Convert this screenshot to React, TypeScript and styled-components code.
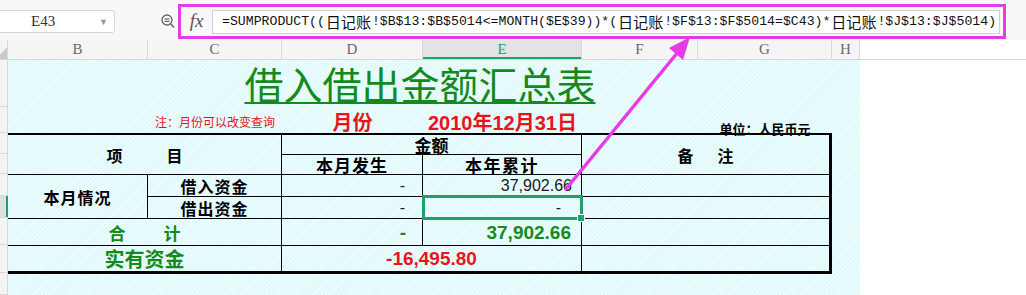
import styled, { createGlobalStyle, css } from 'styled-components';

const GlobalStyle = createGlobalStyle`
  html, body {
    margin: 0;
    padding: 0;
    background: #ffffff;
    overflow: hidden;
  }
  * { box-sizing: border-box; }
`;

const COLS = '140px 134px 141px 159px 116px 134px 28px';
const GREEN = '#148a1c';
const RED = '#e8141c';
const SELECT = '#22a06c';

const Page = styled.div`
	position: relative;
	width: 1026px;
	height: 295px;
	background: #ffffff;
	font-family: 'Noto Sans CJK SC', sans-serif;
`;

/* ---------- formula bar ---------- */

const FormulaBar = styled.div`
	display: flex;
	align-items: flex-start;
	height: 40px;
	padding-top: 4px;
	background: #f8f8f8;
`;

const NameBox = styled.div`
	display: flex;
	align-items: center;
	justify-content: space-between;
	width: 119px;
	height: 23px;
	margin-top: 6px;
	margin-left: -4px;
	padding: 0 6px 0 34px;
	background: #ffffff;
	border: 1px solid #d6d6d6;
	border-radius: 3px;
	font-family: 'Liberation Serif', serif;
	font-size: 15px;
	color: #333333;
`;

const Caret = styled.span`
	font-size: 9px;
	color: #999999;
`;

const ZoomIcon = styled.svg`
	margin: 10px 3px 0 46px;
	flex: none;
`;

const FormulaFrame = styled.div`
	display: flex;
	align-items: center;
	width: 828px;
	height: 35px;
	border: 3px solid #e23de4;
	padding-right: 3px;
`;

const Fx = styled.div`
	width: 31px;
	text-align: center;
	font-family: 'Liberation Serif', serif;
	font-style: italic;
	font-size: 19px;
	color: #555555;
	padding-bottom: 2px;
`;

const FormulaInput = styled.div`
	flex: 1;
	height: 24px;
	display: flex;
	align-items: center;
	padding-left: 9px;
	background: #ffffff;
	border: 1px solid #d2d2d2;
	font-family: 'Liberation Mono', monospace;
	font-size: 13.2px;
	color: #111111;
	white-space: nowrap;
	overflow: hidden;
`;

const Cjk = styled.span`
	font-family: 'Noto Sans CJK SC', sans-serif;
	font-size: 1.15em;
	line-height: 1;
	margin: 0 0.05em;
`;

/* ---------- column headers ---------- */

const ColumnHeaders = styled.div`
	display: grid;
	grid-template-columns: 8px ${COLS} 1fr;
	height: 20px;
	border-bottom: 1px solid #d8d8d8;
`;

const Corner = styled.div`
	background: linear-gradient(135deg, #f3f3f3 55%, #c9c9c9 55%);
	border-right: 1px solid #d8d8d8;
`;

const ColHead = styled.div<{ $active?: boolean }>`
	display: flex;
	align-items: center;
	justify-content: center;
	background: #f5f5f5;
	border-right: 1px solid #dadada;
	font-family: 'Liberation Serif', serif;
	font-size: 15px;
	color: #6a6a6a;
	${p => p.$active && css`
		background: #e3e3e3;
		color: ${SELECT};
		box-shadow: inset 0 -2px 0 ${SELECT};
	`}
`;

const ColRest = styled.div`
	background: #ffffff;
`;

/* ---------- sheet body ---------- */

const SheetBody = styled.div`
	display: flex;
	height: 235px;
`;

const RowHeaders = styled.div`
	display: flex;
	flex-direction: column;
	width: 8px;
`;

const RowHead = styled.div<{ $h: number; $active?: boolean }>`
	height: ${p => p.$h}px;
	flex: none;
	background: ${p => (p.$active ? '#dedede' : '#f4f4f4')};
	border-bottom: 1px solid #d9d9d9;
	box-shadow: ${p => (p.$active ? `inset -2px 0 0 ${SELECT}` : 'inset -1px 0 0 #d9d9d9')};
`;

const Canvas = styled.div`
	width: 852px;
	display: flex;
	flex-direction: column;
	background-color: #e0fafc;
	background-image: repeating-linear-gradient(
		135deg,
		rgba(255, 255, 255, 0.55) 0 1px,
		transparent 1px 3px
	);
`;

const TitleRow = styled.div`
	height: 47px;
	width: 824px;
	display: flex;
	justify-content: center;
	align-items: flex-start;
	padding-top: 4px;
`;

const Title = styled.h1`
	margin: 0;
	font-family: 'Noto Sans CJK SC', sans-serif;
	font-weight: 400;
	font-size: 39px;
	line-height: 38px;
	color: ${GREEN};
	text-decoration: underline;
	text-decoration-thickness: 2px;
	text-underline-offset: 2px;
`;

const InfoRow = styled.div`
	height: 26px;
	display: grid;
	grid-template-columns: ${COLS};
	align-items: center;
`;

const InfoText = styled.div<{ $col: number; $size: number; $bold?: boolean; $color: string; $end?: boolean }>`
	grid-column: ${p => p.$col};
	justify-self: center;
	align-self: ${p => (p.$end ? 'end' : 'center')};
	margin-bottom: ${p => (p.$end ? '-3px' : '0')};
	padding-top: ${p => (p.$end ? '0' : '5px')};
	font-size: ${p => p.$size}px;
	font-weight: ${p => (p.$bold ? 700 : 400)};
	color: ${p => p.$color};
	font-family: 'Liberation Sans', 'Noto Sans CJK SC', sans-serif;
	line-height: 1;
	white-space: nowrap;
`;

/* ---------- the table ---------- */

const Table = styled.div`
	position: relative;
	width: 824px;
	display: grid;
	grid-template-columns: 140px 134px 141px 159px 1fr;
	grid-template-rows: 20px 20px 22px 22px 27px 25px;
	border-top: 2px solid #000000;
	border-bottom: 3px solid #000000;
	border-right: 3px solid #000000;
`;

interface CellProps {
	$col: string;
	$row: string;
	$lastCol?: boolean;
	$lastRow?: boolean;
	$right?: number;
	$selected?: boolean;
}

const Cell = styled.div<CellProps>`
	position: relative;
	grid-column: ${p => p.$col};
	grid-row: ${p => p.$row};
	display: flex;
	align-items: center;
	justify-content: ${p => (p.$right !== undefined ? 'flex-end' : 'center')};
	padding-right: ${p => p.$right ?? 0}px;
	border-right: ${p => (p.$lastCol ? 'none' : '1px solid #000000')};
	border-bottom: ${p => (p.$lastRow ? 'none' : '1px solid #000000')};
	${p => p.$selected && css`
		z-index: 2;
		&::before {
			content: '';
			position: absolute;
			left: -1px;
			top: -2px;
			right: -2px;
			bottom: -2px;
			border: 3px solid ${SELECT};
		}
		&::after {
			content: '';
			position: absolute;
			right: -4px;
			bottom: -4px;
			width: 6px;
			height: 6px;
			background: ${SELECT};
			border: 1px solid #ffffff;
		}
	`}
`;

const Label = styled.span<{ $size?: number; $color?: string; $spacing?: number; $gap?: number }>`
	display: flex;
	gap: ${p => p.$gap ?? 0}px;
	font-family: 'Noto Sans CJK SC', sans-serif;
	font-weight: 700;
	font-size: ${p => p.$size ?? 16}px;
	letter-spacing: ${p => p.$spacing ?? 0}px;
	color: ${p => p.$color ?? '#000000'};
	line-height: 1;
	white-space: nowrap;
`;

const Amount = styled.span<{ $size?: number; $bold?: boolean; $color?: string }>`
	font-family: 'Liberation Sans', sans-serif;
	font-size: ${p => p.$size ?? 16}px;
	font-weight: ${p => (p.$bold ? 700 : 400)};
	color: ${p => p.$color ?? '#1a1a1a'};
	line-height: 1;
`;

const Arrow = styled.svg`
	position: absolute;
	left: 0;
	top: 0;
	pointer-events: none;
`;

export default function App() {
	return (
		<Page>
			<GlobalStyle />
			<FormulaBar>
				<NameBox>
					E43
					<Caret>▼</Caret>
				</NameBox>
				<ZoomIcon width="14" height="15" viewBox="0 0 14 15">
					<circle cx="6" cy="6" r="5" fill="none" stroke="#666" strokeWidth="1.3" />
					<line x1="3.6" y1="5" x2="8.4" y2="5" stroke="#666" strokeWidth="1.2" />
					<line x1="3.6" y1="7.4" x2="8.4" y2="7.4" stroke="#666" strokeWidth="1.2" />
					<line x1="9.6" y1="9.8" x2="13" y2="13.5" stroke="#666" strokeWidth="1.6" />
				</ZoomIcon>
				<FormulaFrame>
					<Fx>fx</Fx>
					<FormulaInput>
						=SUMPRODUCT((<Cjk>日记账</Cjk>!$B$13:$B$5014&lt;=MONTH($E$39))*(<Cjk>日记账</Cjk>!$F$13:$F$5014=$C43)*<Cjk>日记账</Cjk>!$J$13:$J$5014)
					</FormulaInput>
				</FormulaFrame>
			</FormulaBar>

			<ColumnHeaders>
				<Corner />
				<ColHead>B</ColHead>
				<ColHead>C</ColHead>
				<ColHead>D</ColHead>
				<ColHead $active>E</ColHead>
				<ColHead>F</ColHead>
				<ColHead>G</ColHead>
				<ColHead>H</ColHead>
				<ColRest />
			</ColumnHeaders>

			<SheetBody>
				<RowHeaders>
					{[47, 26, 21, 20, 22, 22, 27, 28, 22].map((h, i) => (
						<RowHead key={i} $h={h} $active={i === 5} />
					))}
				</RowHeaders>
				<Canvas>
					<TitleRow>
						<Title>借入借出金额汇总表</Title>
					</TitleRow>
					<InfoRow>
						<InfoText $col={2} $size={12} $color={RED}>注：月份可以改变查询</InfoText>
						<InfoText $col={3} $size={20} $bold $color={RED}>月份</InfoText>
						<InfoText $col={4} $size={20} $bold $color={RED}>2010年12月31日</InfoText>
						<InfoText $col={6} $size={13} $bold $color="#000" $end>单位：人民币元</InfoText>
					</InfoRow>
					<Table>
						<Cell $col="1 / 3" $row="1 / 3">
							<Label $gap={44}><span>项</span><span>目</span></Label>
						</Cell>
						<Cell $col="3 / 5" $row="1">
							<Label $size={17}>金额</Label>
						</Cell>
						<Cell $col="5" $row="1 / 3" $lastCol>
							<Label $gap={24}><span>备</span><span>注</span></Label>
						</Cell>
						<Cell $col="3" $row="2">
							<Label $size={17} $spacing={1}>本月发生</Label>
						</Cell>
						<Cell $col="4" $row="2">
							<Label $size={17} $spacing={1.5}>本年累计</Label>
						</Cell>

						<Cell $col="1" $row="3 / 5">
							<Label $spacing={1}>本月情况</Label>
						</Cell>
						<Cell $col="2" $row="3">
							<Label $spacing={1}>借入资金</Label>
						</Cell>
						<Cell $col="3" $row="3" $right={17}>
							<Amount>-</Amount>
						</Cell>
						<Cell $col="4" $row="3" $right={9}>
							<Amount>37,902.66</Amount>
						</Cell>
						<Cell $col="5" $row="3" $lastCol />

						<Cell $col="2" $row="4">
							<Label $spacing={1}>借出资金</Label>
						</Cell>
						<Cell $col="3" $row="4" $right={17}>
							<Amount>-</Amount>
						</Cell>
						<Cell $col="4" $row="4" $right={20} $selected>
							<Amount>-</Amount>
						</Cell>
						<Cell $col="5" $row="4" $lastCol />

						<Cell $col="1 / 3" $row="5">
							<Label $size={17} $color={GREEN} $gap={38}><span>合</span><span>计</span></Label>
						</Cell>
						<Cell $col="3" $row="5" $right={16}>
							<Amount $size={19} $bold $color={GREEN}>-</Amount>
						</Cell>
						<Cell $col="4" $row="5" $right={10}>
							<Amount $size={19} $bold $color={GREEN}>37,902.66</Amount>
						</Cell>
						<Cell $col="5" $row="5" $lastCol />

						<Cell $col="1 / 3" $row="6" $lastRow>
							<Label $size={20} $color={GREEN}>实有资金</Label>
						</Cell>
						<Cell $col="3 / 5" $row="6" $lastRow>
							<Amount $size={19} $bold $color={RED}>-16,495.80</Amount>
						</Cell>
						<Cell $col="5" $row="6" $lastRow $lastCol />
					</Table>
				</Canvas>
			</SheetBody>

			<Arrow width="1026" height="295" viewBox="0 0 1026 295">
				<line x1="566" y1="189" x2="678" y2="52" stroke="#e63be6" strokeWidth="3.5" strokeLinecap="round" />
				<polygon points="690,37 683,60 669,48" fill="#e63be6" />
			</Arrow>
		</Page>
	);
}
